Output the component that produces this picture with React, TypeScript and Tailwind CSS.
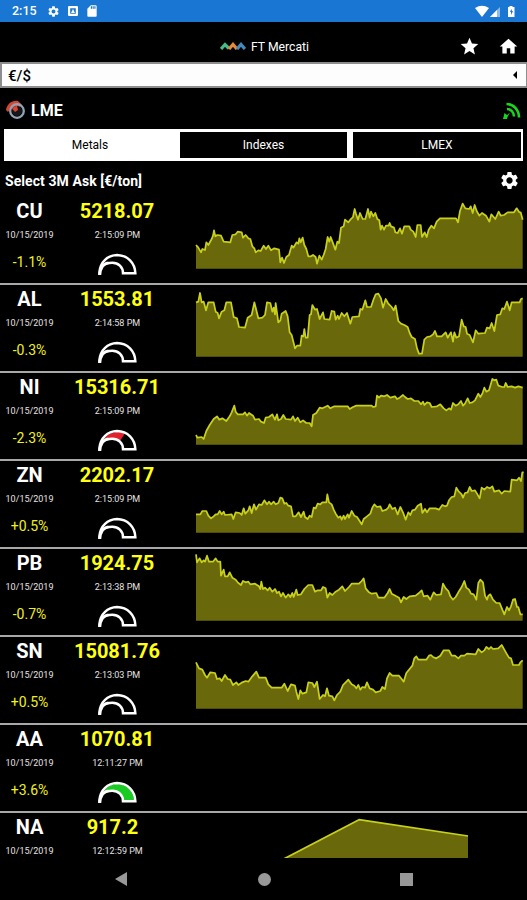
import React from "react";
import { MdSettings, MdStar, MdHome, MdSdCard } from "react-icons/md";

type Gauge = "none" | "hint" | "red" | "green";

interface Metal {
  symbol: string;
  price: string;
  time: string;
  change?: string;
  gauge?: Gauge;
  points?: string;
  shift?: string;
}

const metals: Metal[] = [
  {
    symbol: "CU",
    price: "5218.07",
    time: "2:15:09 PM",
    change: "-1.1%",
    gauge: "hint",
    points:
      "33,150 40,158 48,172 52,162 60,165 64,142 70,150 80,132 84,122 87,106 91,124 97,120 108,122 116,140 136,142 142,120 152,118 158,110 170,112 174,128 182,120 190,130 196,132 202,154 208,160 212,172 220,166 227,168 236,152 243,162 250,152 258,166 268,160 282,164 286,202 291,188 297,204 304,186 312,180 320,152 325,158 335,142 340,146 343,130 347,142 353,128 358,150 364,162 370,184 378,184 384,180 392,186 396,206 403,182 410,194 416,180 422,162 428,126 433,140 437,126 443,142 451,164 457,140 462,144 468,98 476,94 480,74 490,82 496,74 504,66 509,42 513,56 519,74 525,54 533,72 541,72 549,42 554,68 558,50 565,64 571,54 577,72 583,76 587,104 591,92 597,104 603,92 611,92 614,84 618,94 627,98 631,112 638,114 645,100 651,116 658,94 673,94 677,104 685,110 692,126 697,90 707,90 711,126 719,112 725,126 731,104 739,92 747,100 755,80 765,70 813,70 819,82 825,48 833,26 841,40 853,42 857,34 863,54 869,30 875,48 883,62 891,54 903,62 913,80 919,58 926,66 931,72 941,50 947,62 957,60 968,52 987,52 995,40 1003,52 1007,52 1013,74",
  },
  {
    symbol: "AL",
    price: "1553.81",
    time: "2:14:58 PM",
    change: "-0.3%",
    gauge: "none",
    points:
      "33,58 40,56 45,30 50,58 56,56 63,82 70,58 86,58 92,86 98,90 102,106 110,86 118,82 124,58 138,58 146,102 156,106 162,132 180,134 188,104 200,96 208,58 214,82 220,106 232,104 240,96 246,58 256,60 262,86 266,74 270,94 272,60 280,118 286,112 290,92 302,84 308,100 314,148 320,156 330,196 336,188 346,188 350,158 355,160 358,138 362,164 368,164 374,96 378,94 382,66 390,80 396,78 404,108 414,88 418,108 434,110 440,84 448,86 452,110 458,98 462,108 470,90 478,100 486,90 496,122 502,102 522,100 526,78 532,80 541,52 546,72 558,72 566,48 572,34 580,32 588,46 594,74 602,48 610,62 620,72 626,82 632,68 640,114 648,122 658,126 668,132 674,150 680,162 690,168 696,196 702,212 711,212 718,170 726,162 736,160 744,154 750,144 756,160 770,160 782,148 788,164 798,148 804,176 808,148 814,164 822,160 830,110 836,130 842,132 846,152 854,156 864,178 872,142 880,152 900,150 906,134 914,136 920,120 924,132 928,144 936,96 946,94 952,76 958,78 966,56 974,82 980,58 1004,58 1008,48 1013,46",
  },
  {
    symbol: "NI",
    price: "15316.71",
    time: "2:15:09 PM",
    change: "-2.3%",
    gauge: "red",
    points:
      "33,192 37,200 50,198 56,204 64,180 74,162 86,144 96,136 103,146 112,142 124,150 134,136 140,124 148,104 152,122 158,130 174,130 180,124 186,134 192,126 204,134 210,146 222,144 228,152 237,156 242,140 252,138 262,130 270,146 276,130 280,148 288,144 295,132 302,144 318,146 324,136 330,150 338,140 346,154 354,148 364,156 374,156 380,166 384,132 394,126 404,110 412,112 420,108 428,104 436,112 448,106 488,106 494,114 504,108 514,104 560,104 564,108 572,106 576,74 582,80 588,74 598,76 606,72 616,80 630,76 636,84 644,80 654,72 660,78 668,84 678,82 688,90 700,90 708,100 714,92 718,102 726,94 734,96 740,108 756,106 766,100 776,112 784,118 792,112 798,116 804,96 812,104 820,100 828,90 834,104 840,98 848,82 854,96 862,94 870,88 880,68 886,78 892,68 898,50 904,62 912,58 922,24 928,28 934,26 940,44 952,48 958,48 962,36 968,48 980,46 990,50 1000,46 1013,50",
  },
  {
    symbol: "ZN",
    price: "2202.17",
    time: "2:15:09 PM",
    change: "+0.5%",
    gauge: "none",
    points:
      "33,166 46,166 52,156 64,156 70,170 78,178 86,172 92,166 98,166 104,156 110,166 116,158 120,168 140,166 145,180 152,160 164,162 170,168 176,148 181,164 190,154 194,142 200,162 207,136 213,152 222,136 230,138 238,124 246,136 252,128 258,136 266,128 272,136 280,132 286,116 292,118 298,134 304,132 310,140 318,142 324,172 332,172 341,160 348,174 356,158 360,174 368,180 374,170 380,174 386,146 392,148 398,134 406,136 412,130 424,130 427,106 432,130 440,136 446,152 452,164 460,176 466,172 470,182 476,170 480,180 488,166 492,176 500,156 508,170 516,174 524,186 530,196 536,180 546,172 556,164 562,146 568,136 576,144 586,142 592,156 604,152 610,146 614,136 622,150 630,146 638,166 646,144 654,160 662,182 670,160 676,168 682,154 690,152 698,140 708,134 712,162 720,150 726,160 734,148 752,148 762,152 772,138 780,142 786,140 792,124 800,114 808,112 814,86 820,96 830,106 834,116 840,102 848,100 854,84 860,96 870,94 876,104 884,118 890,86 898,92 906,84 914,88 922,82 928,98 942,94 950,104 958,96 976,98 980,62 996,64 1002,56 1008,66 1012,40 1016,40",
  },
  {
    symbol: "PB",
    price: "1924.75",
    time: "2:13:38 PM",
    change: "-0.7%",
    gauge: "none",
    points:
      "33,22 36,46 44,34 50,46 56,40 60,44 66,26 72,44 84,44 92,34 98,44 106,44 108,86 116,68 120,88 128,88 134,76 142,92 152,98 158,106 168,114 174,102 182,106 190,104 196,112 210,110 222,118 226,126 229,104 234,126 240,122 248,130 254,122 262,134 270,126 276,138 282,134 288,148 294,138 302,152 310,142 316,150 322,138 326,150 334,128 338,144 348,142 358,126 370,114 382,114 390,134 398,130 408,130 414,120 422,124 427,152 434,138 442,144 452,134 462,128 472,118 480,132 492,120 500,110 522,110 530,102 536,94 542,124 552,136 560,140 574,138 580,152 598,152 608,138 614,126 620,140 634,148 642,152 648,166 656,150 664,156 674,148 692,146 702,138 710,130 716,148 728,146 736,158 746,136 754,144 768,142 774,110 782,124 790,132 796,148 804,158 812,150 820,136 830,120 838,102 844,122 852,128 858,140 866,142 874,158 880,108 886,98 894,106 900,146 906,158 910,146 916,142 924,158 934,168 944,168 952,188 958,202 966,180 972,190 978,178 984,158 990,156 996,180 1000,180 1006,202 1013,202",
  },
  {
    symbol: "SN",
    price: "15081.76",
    time: "2:13:03 PM",
    change: "+0.5%",
    gauge: "none",
    points:
      "33,82 42,100 52,104 60,120 66,128 76,112 90,114 96,132 104,130 110,138 120,120 128,132 136,134 144,150 154,142 160,150 172,142 182,138 190,140 202,124 214,110 222,128 242,128 250,148 260,158 290,158 298,146 308,168 318,148 330,152 334,170 340,192 346,166 352,176 364,172 370,142 382,144 388,156 396,140 404,192 414,180 420,184 426,160 432,182 442,184 448,196 456,180 466,170 474,150 482,142 490,134 500,148 508,152 514,160 520,150 526,164 532,156 540,158 546,142 554,160 564,164 572,172 586,168 592,156 600,162 606,130 614,114 622,122 642,122 650,132 656,140 664,114 672,104 682,92 688,70 694,64 700,74 724,74 732,62 738,60 744,66 754,70 766,62 776,46 792,46 800,62 810,62 820,70 828,62 838,62 846,56 872,58 880,42 890,52 898,46 904,36 912,42 918,36 924,42 940,40 950,30 958,44 966,58 972,68 978,70 984,90 1002,90 1006,82 1013,76",
  },
  { symbol: "AA", price: "1070.81", time: "12:11:27 PM", change: "+3.6%", gauge: "green" },
  { symbol: "NA", price: "917.2", time: "12:12:59 PM", points: "296,144 522,26 849,75", shift: "pr-[9px]" },
];

function Sparkline({ points }: { points: string }) {
  const pairs = points.split(" ");
  const base = 221;
  const firstX = pairs[0].split(",")[0];
  const lastX = pairs[pairs.length - 1].split(",")[0];
  return (
    <svg className="h-[86px] w-[342px] shrink-0" viewBox="0 6 1026 258">
      <polygon points={`${firstX},${base} ${points} ${lastX},${base}`} fill="#69690c" />
      <polyline points={points} fill="none" stroke="#c9d01c" strokeWidth="5.2" strokeLinejoin="round" />
    </svg>
  );
}

function GaugeIcon({ kind }: { kind: Gauge }) {
  const shape = "M299 240V232C302 200 324 181 352 180C384 181 406 203 407 235H370C370 216 356 203 338 203C326 203 316 206 310 212";
  return (
    <svg className="h-[26px] w-[46px]" viewBox="283 168 138 78">
      {kind === "green" && <path d="M310 209C320 190 336 183 352 183C384 184 402 205 404 235H370C370 214 348 196 310 209Z" fill="#19cb22" />}
      {kind === "red" && <path d="M311 207C326 184 352 180 376 187L359 213C348 203 330 200 311 207Z" fill="#e3202c" />}
      {kind === "hint" && <path d="M312 207L320 199L322 203Z" fill="#e3202c" />}
      <path d={shape} fill="none" stroke="#fff" strokeWidth="7.5" />
      <path d="M301 240C302 219 313 204 326 203" fill="none" stroke="#fff" strokeWidth="7.5" />
    </svg>
  );
}

function MetalRow({ metal }: { metal: Metal }) {
  return (
    <div className="flex h-[88px] shrink-0 border-b-2 border-[#a8a8a8]">
      <div className="flex w-[59px] shrink-0 flex-col items-center">
        <div className="mt-[2px] h-6 text-[20px] leading-6 font-bold">{metal.symbol}</div>
        <div className="mt-[6px] h-3 text-[9px] leading-3 whitespace-nowrap text-[#e4e4e4]">10/15/2019</div>
        <div className="mt-[11px] text-[14px] leading-5 text-[#f0f01c]">{metal.change}</div>
      </div>
      <div className="flex w-[126px] shrink-0 flex-col items-center pr-[10px]">
        <div className={`mt-[2px] h-6 text-[20px] leading-6 font-bold text-[#ffff10] ${metal.shift ?? ""}`}>{metal.price}</div>
        <div className="mt-[6px] h-3 pl-[1px] text-[9px] leading-3 whitespace-nowrap text-[#e4e4e4]">{metal.time}</div>
        <div className="mt-[10px]">{metal.gauge && <GaugeIcon kind={metal.gauge} />}</div>
      </div>
      {metal.points && <Sparkline points={metal.points} />}
    </div>
  );
}

function StatusBar() {
  return (
    <div className="flex h-[22px] shrink-0 items-center bg-[#1976d2] pr-[10px] pl-3">
      <span className="w-[35px] text-[12.5px] font-medium">2:15</span>
      <MdSettings className="size-[13px]" />
      <svg className="ml-[8px] size-[10px]" viewBox="0 0 10 10">
        <path fill="#fff" fillRule="evenodd" d="M1 0H9Q10 0 10 1V9Q10 10 9 10H1Q0 10 0 9V1Q0 0 1 0ZM2.200 2.200V7.800H7.800V2.200ZM5 3L7 7H3Z" />
      </svg>
      <MdSdCard className="ml-[7px] size-[14px]" />
      <svg className="ml-auto h-[13px] w-[42px]" viewBox="0 0 42 13">
        <path d="M0 3Q7 -1.500 14 3L7 12Z" fill="#fff" />
        <path d="M15 12L25 2V12Z" fill="#8bbce9" />
        <path d="M15 12L22 5V12Z" fill="#fff" />
        <path d="M34.500 1H37.500V2H39.500V12H33V2H34.500Z" fill="#fff" />
        <path d="M36.500 4L35 7H36V10L38 6H37Z" fill="#1976d2" />
      </svg>
    </div>
  );
}

export default function App() {
  return (
    <div className="flex h-[900px] w-[527px] flex-col overflow-hidden bg-black font-['Roboto',sans-serif] text-white">
      <StatusBar />
      <header className="grid h-10 shrink-0 grid-cols-[1fr_auto_1fr] items-center pt-2 pr-[8px]">
        <span />
        <div className="flex items-center gap-[5px] pl-[10px]">
          <svg className="h-2 w-[26px]" viewBox="0 0 26 8" fill="none" strokeWidth="3.2">
            <path d="M1 7L5 2.500L9 6.500" stroke="#48b987" />
            <path d="M9 7L13 2.500L17 7" stroke="#e8883d" />
            <path d="M17 7L21 2.500L25 7" stroke="#4489bd" />
          </svg>
          <span className="pt-[1px] text-[12.2px] leading-4 whitespace-nowrap">FT Mercati</span>
        </div>
        <div className="flex items-center justify-end gap-[18px]">
          <MdStar className="size-[21px]" />
          <MdHome className="size-[21px]" />
        </div>
      </header>

      <div className="flex h-[26px] shrink-0 items-center justify-between border-y-2 border-r border-l-2 border-[#8d8d8d] bg-[#fdfdfd] pr-[9px] pl-[6px] text-black">
        <span className="pt-[1px] text-[15px] leading-5 font-medium">€/$</span>
        <svg className="h-2 w-1" viewBox="0 0 4 8">
          <path d="M4 0V8L0 4Z" fill="#000" />
        </svg>
      </div>

      <div className="flex h-[40px] shrink-0 items-center pt-[6px] pr-[6px] pl-[6px]">
        <svg className="mb-[2px] h-5 w-5" viewBox="0 0 20 20">
          <path d="M0 10C1 4 6 0 12 1L16 5L8 11L5 8L2 12Z" fill="#d64531" />
          <circle cx="11" cy="11" r="6.800" fill="none" stroke="#91a4b5" strokeWidth="2.300" />
          <circle cx="11" cy="11" r="5" fill="#191619" />
          <path d="M6.500 9Q8 5.500 11 6L12 10L9 12Z" fill="#d64531" />
        </svg>
        <h1 className="ml-[5px] text-[16px] leading-5 font-bold">LME</h1>
        <svg className="ml-auto h-[18px] w-[18px]" viewBox="0 0 18 18" fill="none" stroke="#18d51e" strokeWidth="2.600">
          <path d="M3.500 2C10.500 2 16 8 16 15.500" />
          <path d="M4 7C8 7 11 10.500 11 14.500" />
          <path d="M0 17L1.500 11L4 13L7 10.500L4.500 15L4 17Z" fill="#18d51e" stroke="none" />
        </svg>
      </div>

      <nav className="mx-1 mt-[1px] grid h-[32px] shrink-0 grid-cols-[176px_167px_168px] bg-white pt-[3px] pb-[4px] text-[12px] leading-[25px]">
        <button className="pt-[1px] pr-1 text-black">Metals</button>
        <button className="bg-black pt-[1px]">Indexes</button>
        <button className="ml-[6px] w-[168px] bg-black pt-[1px]">LMEX</button>
      </nav>

      <div className="flex h-[36px] shrink-0 items-center justify-between pt-[3px] pr-[7px] pl-[5px]">
        <span className="text-[14px] leading-5 font-bold tracking-[0.005em] whitespace-nowrap">Select 3M Ask [€/ton]</span>
        <MdSettings className="size-[21px]" />
      </div>

      <main className="flex h-[661px] shrink-0 flex-col overflow-hidden">
        {metals.map((metal) => (
          <MetalRow key={metal.symbol} metal={metal} />
        ))}
      </main>

      <footer className="flex h-[42px] shrink-0 items-center pl-[115px]">
        <svg className="h-[14px] w-[13px]" viewBox="0 0 13 14">
          <path d="M0 7L12 0V14Z" fill="#989898" />
        </svg>
        <div className="ml-[130px] size-[13px] rounded-full bg-[#989898]" />
        <div className="ml-[129px] size-[13px] bg-[#989898]" />
      </footer>
    </div>
  );
}
